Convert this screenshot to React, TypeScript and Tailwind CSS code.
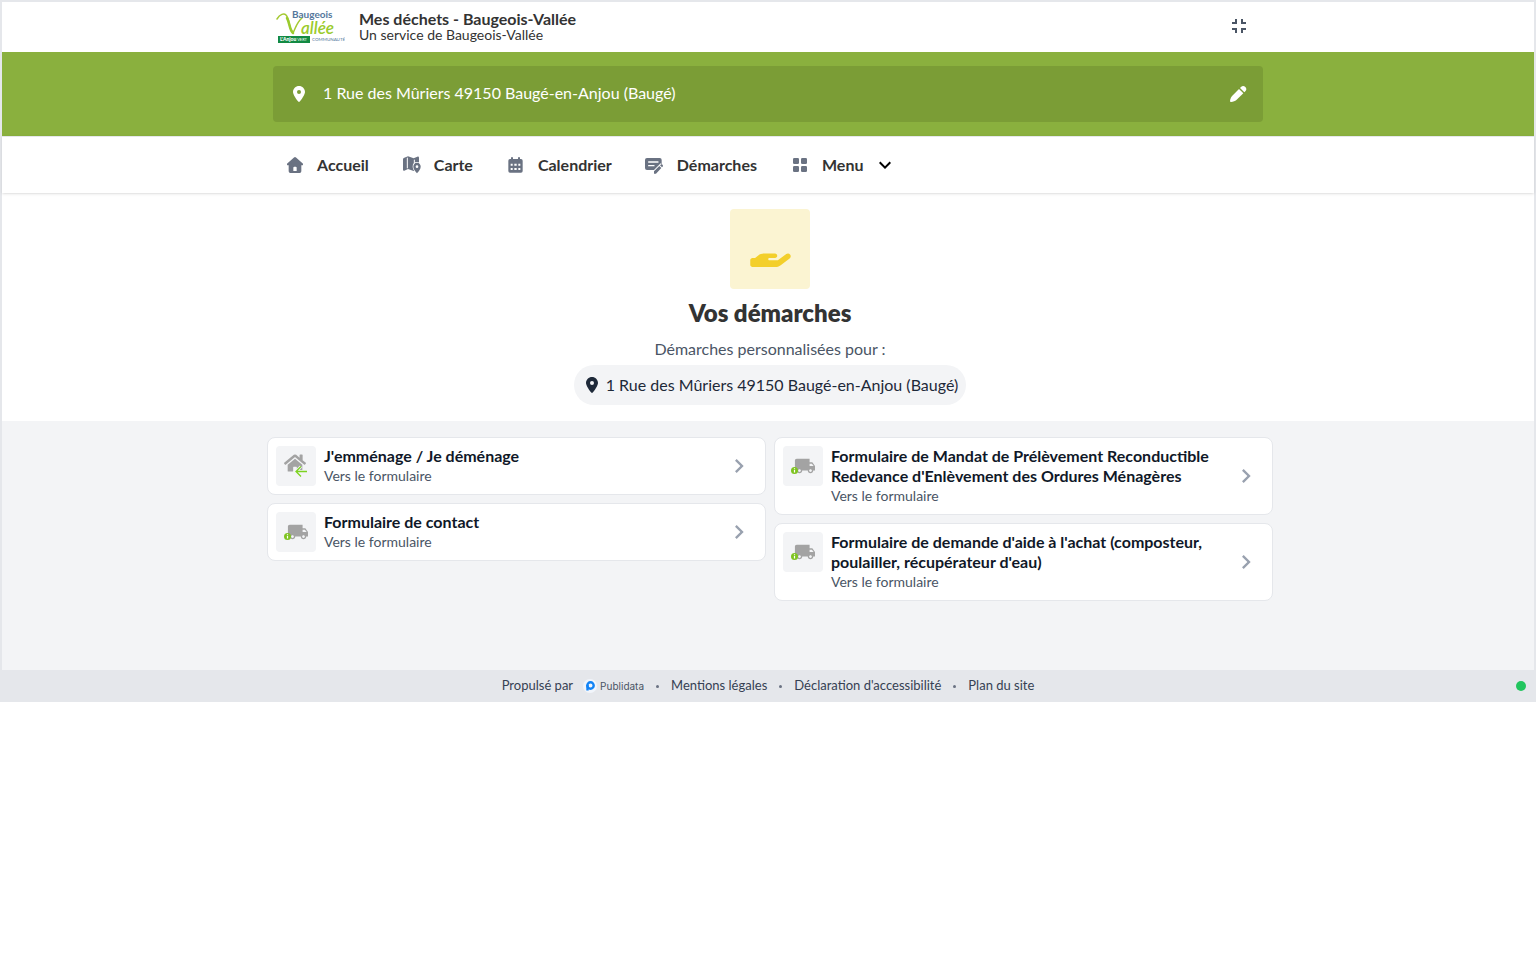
import type { ReactNode } from 'react';
import { FaHandHolding, FaLocationDot } from 'react-icons/fa6';
import { FaHome } from 'react-icons/fa';
import { MdChevronRight, MdExpandMore, MdFullscreenExit, MdLocalShipping } from 'react-icons/md';

const ADDRESS = '1 Rue des Mûriers 49150 Baugé-en-Anjou (Baugé)';

interface Procedure {
  title: string;
  icon: 'move' | 'truck';
}

const leftColumn: Procedure[] = [
  { title: "J'emménage / Je déménage", icon: 'move' },
  { title: 'Formulaire de contact', icon: 'truck' },
];

const rightColumn: Procedure[] = [
  {
    title: "Formulaire de Mandat de Prélèvement Reconductible Redevance d'Enlèvement des Ordures Ménagères",
    icon: 'truck',
  },
  {
    title: "Formulaire de demande d'aide à l'achat (composteur, poulailler, récupérateur d'eau)",
    icon: 'truck',
  },
];

const footerLinks = ['Mentions légales', "Déclaration d'accessibilité", 'Plan du site'];

function Logo() {
  return (
    <svg width="72" height="36" viewBox="0 0 72 36" role="img" aria-label="Baugeois Vallée">
      <path d="M4 10c3-5 7-6 9-4 4 4 2 13 7 18 3-6 4-11 9-15" fill="none" stroke="#a4c931" strokeWidth="1.5" strokeLinecap="round" />
      <path d="M14 9c3 5 2 11 6 15" fill="none" stroke="#9bcb2d" strokeWidth="2.5" strokeLinecap="round" />
      <text x="19" y="9" fontSize="10" fontWeight="700" fill="#54779c" fontFamily="Lato, sans-serif">
        Baugeois
      </text>
      <text x="28" y="25" fontSize="17" fontWeight="600" fontStyle="italic" fill="#9bcb2d" fontFamily="Lato, sans-serif">
        allée
      </text>
      <rect x="5" y="27" width="32" height="7" fill="#128a43" />
      <text x="7" y="32" fontSize="5" fontWeight="900" fill="#fff" fontFamily="Lato, sans-serif">
        L'Anjou
        <tspan fontWeight="400" fontSize="4"> VERT</tspan>
      </text>
      <text x="39" y="32" fontSize="4.500" fill="#54779c" fontFamily="Lato, sans-serif">
        COMMUNAUTÉ
      </text>
    </svg>
  );
}

function HomeIcon() {
  return (
    <svg width="16" height="16" viewBox="0 0 48 48" fill="currentColor" aria-hidden="true">
      <path
        fillRule="evenodd"
        d="M21 1.500a4.500 4.500 0 0 1 6 0l19.500 17.500c3 2.700 1.500 6-1.500 6h-2v18a5 5 0 0 1-5 5H10a5 5 0 0 1-5-5V25H3c-3 0-4.500-3.300-1.500-6zM19 32v10h10V32a3 3 0 0 0-3-3h-4a3 3 0 0 0-3 3z"
      />
    </svg>
  );
}

function MapIcon() {
  return (
    <svg width="18" height="18" viewBox="0 0 54 54" aria-hidden="true">
      <path fill="currentColor" d="M0 11c0-3 1-5 4-6l11-4 17 6 11-5c3-1 5 0 5 3v34l-16 6-17-6-11 5c-2 1-4 0-4-3z" />
      <path stroke="#fff" strokeWidth="3" d="M13 5v32M34 11v30" />
      <path
        fill="currentColor"
        stroke="#fff"
        strokeWidth="4"
        paintOrder="stroke"
        d="M42 20c7 0 11 5 11 12 0 6-4 12-11 20-7-8-11-14-11-20 0-7 4-12 11-12z"
      />
      <circle cx="42" cy="32" r="4" fill="#fff" />
    </svg>
  );
}

function CalendarIcon() {
  return (
    <svg width="15" height="16" viewBox="0 0 45 48" aria-hidden="true">
      <path fill="currentColor" d="M9 1h6v5h15V1h6v5h3a5 5 0 0 1 5 5v31a5 5 0 0 1-5 5H6a5 5 0 0 1-5-5V11a5 5 0 0 1 5-5h3z" />
      <path fill="#fff" d="M8 20h6v6H8zM19 20h7v6h-7zM31 20h6v6h-6zM8 33h6v6H8zM19 33h7v6h-7zM31 33h6v6h-6z" />
    </svg>
  );
}

function FormIcon() {
  return (
    <svg width="19" height="17" viewBox="0 0 57 51" aria-hidden="true">
      <path fill="currentColor" d="M6 3h38a6 6 0 0 1 6 6v30H6a6 6 0 0 1-6-6V9a6 6 0 0 1 6-6z" />
      <path stroke="#fff" strokeWidth="4" strokeLinecap="round" d="M11 15h28M11 26h16" />
      <path stroke="#fff" strokeWidth="17" d="M27 51l26-26" />
      <path fill="currentColor" d="M27 43l16-16 6 6-16 17h-6zM45 25l2-2c4-3 9 2 6 6l-2 2z" />
    </svg>
  );
}

function GridIcon() {
  return (
    <svg width="14" height="14" viewBox="0 0 42 42" fill="currentColor" aria-hidden="true">
      <rect width="18" height="18" rx="4" />
      <rect x="24" width="18" height="18" rx="4" />
      <rect y="24" width="18" height="18" rx="4" />
      <rect x="24" y="24" width="18" height="18" rx="4" />
    </svg>
  );
}

function PencilIcon() {
  return (
    <svg width="17" height="16" viewBox="0 0 51 48" fill="currentColor" aria-hidden="true">
      <path d="M27 9l13 13-20 19c-5 4-10 6-17 7-2 0-3-1-3-3 1-7 3-12 7-16z" />
      <path d="M30 6l3-3c4-4 9-4 13 0s4 9 0 13l-3 3z" />
    </svg>
  );
}

function MoveIcon() {
  return (
    <svg width="24" height="24" viewBox="0 0 24 24" aria-hidden="true">
      <FaHome x="0" y="-2" size={22} color="#a3a3a3" />
      <path d="M24 17.500H13M17 12.500l-5 5 5 5" fill="none" stroke="#f3f4f6" strokeWidth="3" />
      <path d="M23 17.500H12.500M17 12.500l-5 5 5 5" fill="none" stroke="#7dd321" strokeWidth="1.300" />
    </svg>
  );
}

function TruckIcon() {
  return (
    <svg width="24" height="24" viewBox="0 0 24 24" aria-hidden="true">
      <MdLocalShipping x="3" y="1" size={22} color="#a3a3a3" />
      <circle cx="3.500" cy="16.500" r="3.500" fill="#7fc421" />
      <path d="M3.500 14.300v1M3.500 16v2.500" stroke="#fff" strokeWidth="1.200" />
    </svg>
  );
}

function NavLink({ icon, label }: { icon: ReactNode; label: string }) {
  return (
    <a href="#" className="flex items-center gap-2.5">
      <span className="flex w-6 justify-center text-gray-500">{icon}</span>
      {label}
    </a>
  );
}

function ProcedureCard({ title, icon }: Procedure) {
  return (
    <a href="#" className="flex gap-2 rounded-lg border border-gray-200 bg-white p-2">
      <span className="flex size-10 shrink-0 items-center justify-center rounded bg-gray-100">
        {icon === 'move' ? <MoveIcon /> : <TruckIcon />}
      </span>
      <span className="flex flex-1 flex-col">
        <span className="text-base/5 font-bold text-gray-900">{title}</span>
        <span className="text-sm/5 text-gray-600">Vers le formulaire</span>
      </span>
      <MdChevronRight className="mr-1 size-7 shrink-0 self-center text-gray-400" />
    </a>
  );
}

export default function App() {
  return (
    <div className="bg-white font-[Lato,sans-serif] text-base text-[#333]">
      <div className="border-x-2 border-t-2 border-gray-200">
        {/* Header */}
        <header className="mx-auto flex h-[50px] max-w-[990px] items-center">
          <Logo />
          <div className="ml-3.5 flex-1">
            <p className="text-base/4 font-bold">Mes déchets - Baugeois-Vallée</p>
            <p className="text-sm/4">Un service de Baugeois-Vallée</p>
          </div>
          <button type="button" aria-label="Quitter le plein écran" className="mr-3 pb-0.5 text-gray-600">
            <MdFullscreenExit className="size-6" />
          </button>
        </header>

        {/* Address bar */}
        <div className="bg-[#8ab03e] py-3.5">
          <div className="mx-auto flex h-14 max-w-[990px] items-center rounded bg-[#7b9d36] px-4 text-white">
            <FaLocationDot className="size-4 w-5" />
            <span className="ml-3.5 flex-1 pb-0.5">{ADDRESS}</span>
            <button type="button" aria-label="Modifier l'adresse">
              <PencilIcon />
            </button>
          </div>
        </div>

        {/* Navigation */}
        <nav className="relative border-t border-gray-200 bg-white shadow-sm">
          <div className="mx-auto flex h-14 max-w-[990px] items-center gap-[31px] px-2.5 font-bold">
            <NavLink icon={<HomeIcon />} label="Accueil" />
            <NavLink icon={<MapIcon />} label="Carte" />
            <NavLink icon={<CalendarIcon />} label="Calendrier" />
            <NavLink icon={<FormIcon />} label="Démarches" />
            <button type="button" className="flex items-center gap-2.5">
              <span className="flex w-6 justify-center text-gray-500">
                <GridIcon />
              </span>
              Menu
              <MdExpandMore className="size-6 text-black" />
            </button>
          </div>
        </nav>

        <main className="bg-gray-100">
          {/* Page title */}
          <section className="flex flex-col items-center bg-white py-4 pl-1">
            <div className="flex size-20 items-center justify-center rounded bg-[#fbf4d2]">
              <FaHandHolding className="h-9 w-[41px] text-[#f3cf2b]" />
            </div>
            <h1 className="mt-2 text-2xl/8 font-extrabold">Vos démarches</h1>
            <p className="mt-2 text-gray-600">Démarches personnalisées pour :</p>
            <div className="mt-1 flex h-10 items-center gap-1 rounded-full bg-gray-100 px-2 text-gray-800">
              <FaLocationDot className="size-4 w-5" />
              {ADDRESS}
            </div>
          </section>

          {/* Procedures */}
          <section className="pt-4 pb-[69px] pl-1">
            <div className="mx-auto grid max-w-[1006px] grid-cols-2 items-start gap-2">
              <div className="flex flex-col gap-2">
                {leftColumn.map((item) => (
                  <ProcedureCard key={item.title} {...item} />
                ))}
              </div>
              <div className="flex flex-col gap-2">
                {rightColumn.map((item) => (
                  <ProcedureCard key={item.title} {...item} />
                ))}
              </div>
            </div>
          </section>
        </main>
      </div>

      {/* Footer */}
      <footer className="relative flex h-8 items-center justify-center bg-gray-200 text-[13px] text-gray-700">
        <span>Propulsé par</span>
        <a href="#" className="ml-2.5 flex items-center font-[Inter,sans-serif] text-[10px] text-gray-600">
          <svg width="17" height="14" viewBox="0 0 17 14" aria-hidden="true">
            <circle cx="7" cy="7" r="7" fill="#f1f5fb" />
            <circle cx="7.500" cy="6.500" r="3.200" fill="none" stroke="#1283f5" strokeWidth="2.400" />
            <path d="M4.500 6v5.500" stroke="#1283f5" strokeWidth="2.400" />
          </svg>
          Publidata
        </a>
        {footerLinks.map((label) => (
          <span key={label} className="flex items-center">
            <span className="mx-3 size-[3px] rounded-full bg-gray-500" />
            <a href="#">{label}</a>
          </span>
        ))}
        <span className="absolute right-2.5 size-2.5 rounded-full bg-[#22c55e]" />
      </footer>
    </div>
  );
}
